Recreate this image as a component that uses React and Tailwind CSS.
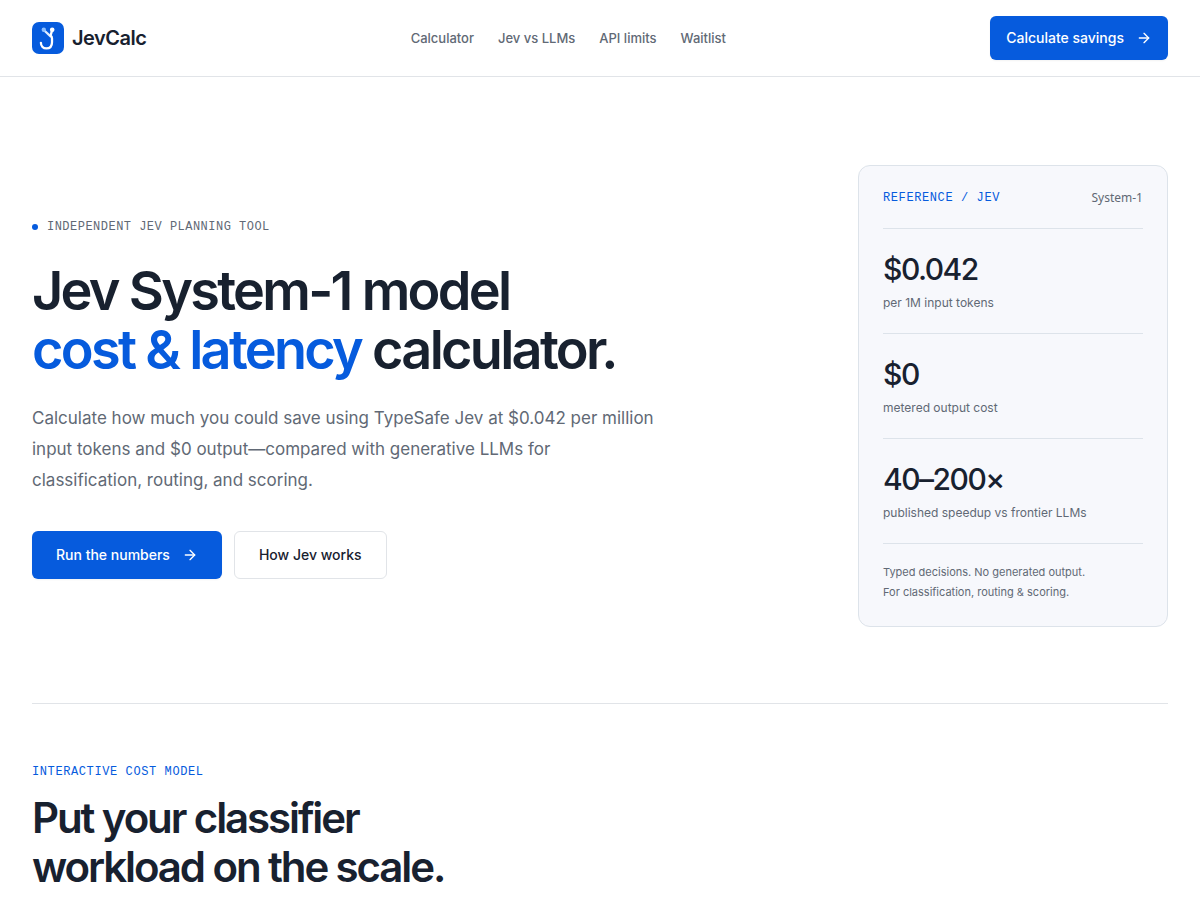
import { ArrowRight } from "lucide-react";

const navLinks = [
  { label: "Calculator", href: "#calculator" },
  { label: "Jev vs LLMs", href: "#compare" },
  { label: "API limits", href: "#limits" },
  { label: "Waitlist", href: "#waitlist" },
];

const stats = [
  { value: "$0.042", label: "per 1M input tokens" },
  { value: "$0", label: "metered output cost" },
  { value: "40–200×", label: "published speedup vs frontier LLMs" },
];

function Logo() {
  return (
    <svg className="size-8" viewBox="0 0 32 32" fill="none" aria-hidden="true">
      <rect width="32" height="32" rx="7" fill="#065bdd" />
      <path d="M12 8.2 18.6 14.4" stroke="#e3eeff" strokeWidth="2.2" strokeLinecap="round" />
      <path
        d="M20.2 8.2 18.6 13.4c1 .9 1.4 1.8 1.4 3.2v3.6c0 3.9-2.2 6.2-5.6 6.2-3.2 0-5.5-2.2-5.5-5.6"
        stroke="#fff"
        strokeWidth="2.3"
        strokeLinecap="round"
        strokeLinejoin="round"
      />
      <circle cx="11.8" cy="7.8" r="2.2" fill="#8fc0ff" />
      <circle cx="20.2" cy="7.8" r="2.3" fill="#fff" />
    </svg>
  );
}

function Header() {
  return (
    <header className="border-b border-[#e1e4e8]">
      <div className="flex items-center justify-between px-8 py-4">
        <a href="#top" className="flex items-center gap-2 text-[20px] leading-7 font-semibold tracking-tight">
          <Logo />
          JevCalc
        </a>
        <nav aria-label="Main" className="flex gap-6 text-[13px] leading-5 font-medium text-[#616975]">
          {navLinks.map((link) => (
            <a key={link.label} href={link.href}>
              {link.label}
            </a>
          ))}
        </nav>
        <a
          href="#calculator"
          className="flex h-11 items-center gap-3 rounded-md bg-[#065bdd] px-4 text-sm font-medium text-white shadow-xs"
        >
          Calculate savings
          <ArrowRight className="size-4" aria-hidden="true" />
        </a>
      </div>
    </header>
  );
}

function ReferenceCard() {
  return (
    <aside className="w-[310px] shrink-0 rounded-xl border border-[#dde3ea] bg-[#f7f8fc] p-6">
      <div className="flex items-start justify-between pb-[22px] leading-4">
        <span className="font-['Liberation_Mono',monospace] text-xs tracking-wider text-[#065bdd]">
          REFERENCE / JEV
        </span>
        <span className="font-['Noto_Sans',sans-serif] text-xs text-[#616975]">System-1</span>
      </div>
      <dl>
        {stats.map((stat) => (
          <div key={stat.value} className="flex flex-col-reverse gap-1.5 border-t border-[#dde3ea] pt-[22px] pb-5">
            <dt className="text-xs leading-5 text-[#616975]">{stat.label}</dt>
            <dd className="text-[30px] leading-9 font-medium tracking-tighter">{stat.value}</dd>
          </div>
        ))}
      </dl>
      <p className="border-t border-[#dde3ea] pt-[18px] text-[11px] leading-5 text-[#616975]">
        Typed decisions. No generated output.
        <br />
        For classification, routing &amp; scoring.
      </p>
    </aside>
  );
}

function Hero() {
  return (
    <section className="flex items-center justify-between gap-12 border-b border-[#e1e4e8] pt-22 pb-19">
      <div className="pt-1.5">
        <p className="flex items-center gap-[9px] font-['Liberation_Mono',monospace] text-xs leading-4 tracking-[0.04em] text-[#616975]">
          <span className="size-1.5 rounded-full bg-[#065bdd]" />
          INDEPENDENT JEV PLANNING TOOL
        </p>
        <h1 className="mt-[26px] text-[54px] leading-[59px] font-semibold tracking-tighter">
          Jev System-1 model
          <br />
          <span className="text-[#065bdd]">cost &amp; latency</span> calculator.
        </h1>
        <p className="mt-6 max-w-[640px] text-[17px] leading-[31px] text-[#616975]">
          Calculate how much you could save using TypeSafe Jev at $0.042 per million
          <br />
          input tokens and $0 output—compared with generative LLMs for
          <br />
          classification, routing, and scoring.
        </p>
        <div className="mt-[35px] flex gap-3 text-sm font-medium">
          <a
            href="#calculator"
            className="flex h-12 items-center gap-3 rounded-md bg-[#065bdd] px-6 text-white shadow-xs"
          >
            Run the numbers
            <ArrowRight className="size-4" aria-hidden="true" />
          </a>
          <a href="#how" className="flex h-12 items-center rounded-md border border-[#e1e4e8] px-6">
            How Jev works
          </a>
        </div>
      </div>
      <ReferenceCard />
    </section>
  );
}

export default function App() {
  return (
    <div id="top" className="bg-white font-['Inter',sans-serif] text-[#18212f]">
      <Header />
      <main className="px-8">
        <Hero />
        <section id="calculator" className="pt-15">
          <p className="font-['Liberation_Mono',monospace] text-xs leading-4 tracking-wider text-[#065bdd]">
            INTERACTIVE COST MODEL
          </p>
          <h2 className="mt-[13px] text-[42px] leading-[49px] font-semibold tracking-tighter">
            Put your classifier
            <br />
            workload on the scale.
          </h2>
        </section>
      </main>
    </div>
  );
}
